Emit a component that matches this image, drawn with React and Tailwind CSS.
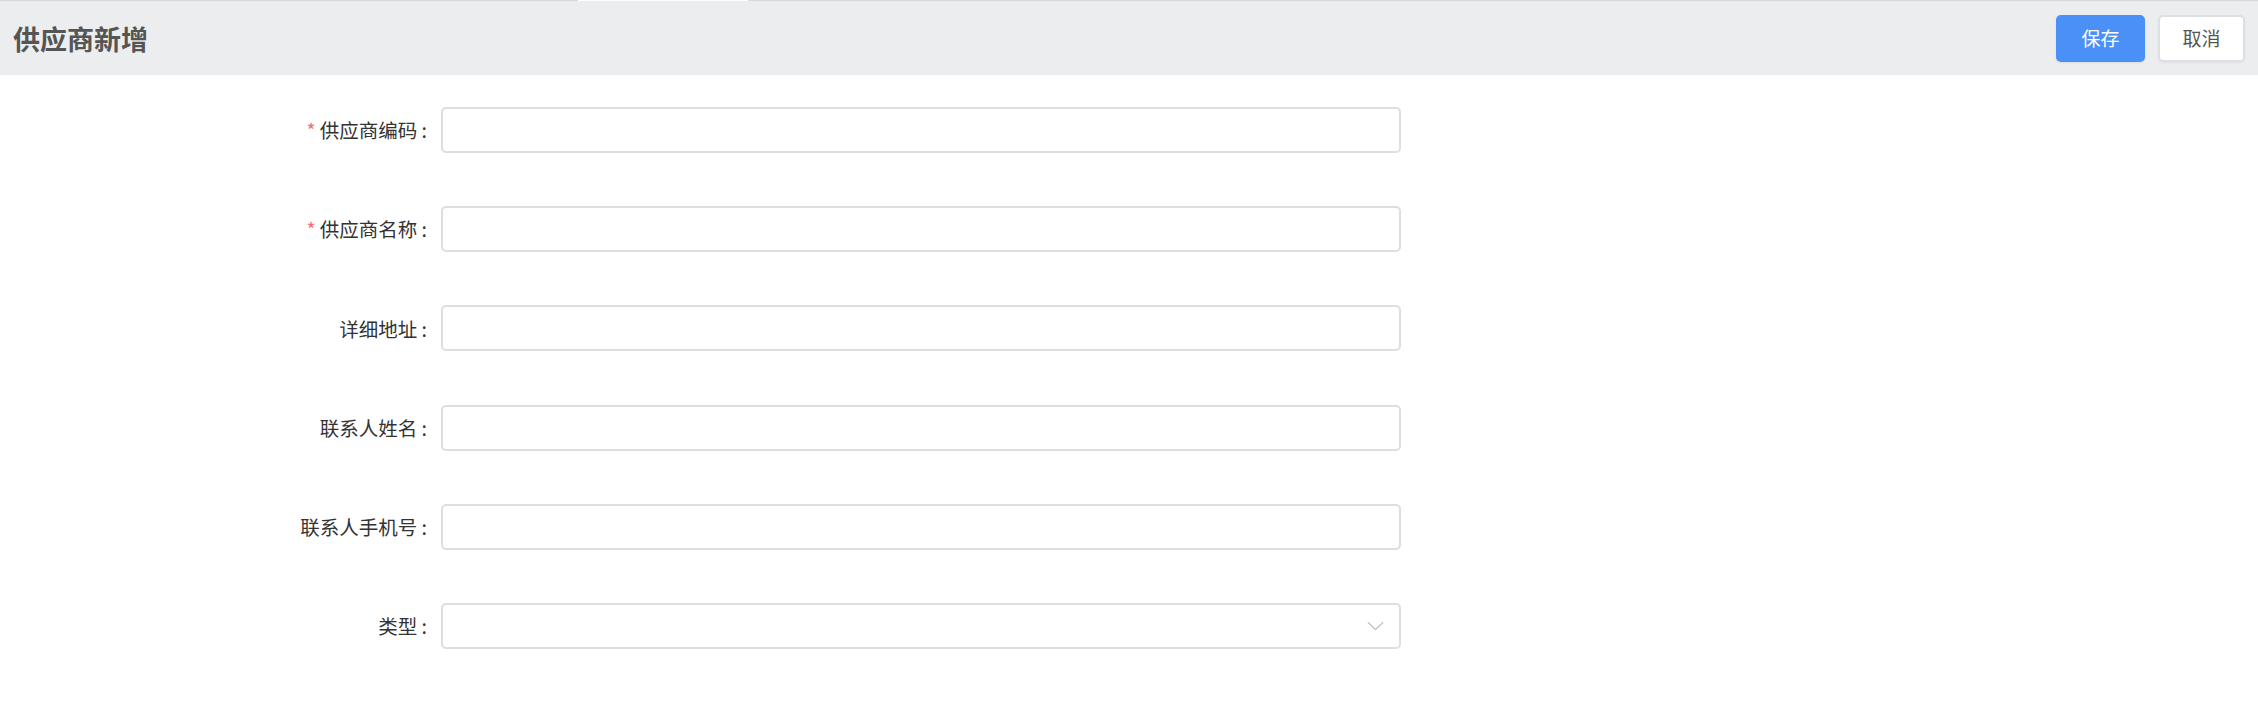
import React from "react"

const font = { fontFamily: '"Noto Sans CJK SC", "Noto Sans", sans-serif' }

const fields = [
  { label: "供应商编码", required: true },
  { label: "供应商名称", required: true },
  { label: "详细地址" },
  { label: "联系人姓名" },
  { label: "联系人手机号" },
  { label: "类型", select: true },
]

const SupplierCreate = () => {
  return (
    <div className="min-h-screen bg-white" style={font}>
      {/* tab strip edge */}
      <div className="flex h-px">
        <div className="w-[578px] bg-[#d6d8db]"></div>
        <div className="w-[170px] bg-white"></div>
        <div className="flex-1 bg-[#d6d8db]"></div>
      </div>

      {/* Header */}
      <div className="flex h-[74px] items-center justify-between bg-[#ecedef] pl-[13px] pr-[13px]">
        <h1 className="text-[27px] font-bold leading-none text-[#555555]">供应商新增</h1>
        <div className="flex items-center gap-[13px]">
          <button className="h-[47px] w-[89px] rounded-[5px] bg-[#4a90f6] text-[19px] text-white shadow-[0_1px_2px_rgba(0,0,0,0.08)]">
            保存
          </button>
          <button className="h-[47px] w-[87px] rounded-[5px] border-2 border-[#dcdfe3] bg-white text-[19px] text-[#555555] shadow-[0_1px_2px_rgba(0,0,0,0.05)]">
            取消
          </button>
        </div>
      </div>

      {/* Form */}
      <div className="flex flex-col gap-[53.2px] pl-[261px] pt-[32px]">
        {fields.map((f) => (
          <div key={f.label} className="flex items-center">
            <label className="w-[180px] pr-[14px] text-right text-[19.5px] leading-none text-[#333333]">
              {f.required && <span className="mr-[4px] text-[#f56c6c]">*</span>}
              {f.label} :
            </label>
            <div className="relative h-[46px] w-[960px] rounded-[5px] border-2 border-[#dcdee2] bg-white">
              {f.select && (
                <svg
                  className="absolute right-[15px] top-1/2 -translate-y-1/2"
                  width="17"
                  height="9"
                  viewBox="0 0 17 9"
                  fill="none"
                >
                  <path d="M0.8 0.8 L8.5 8 L16.2 0.8" stroke="#c0c4cc" strokeWidth="1.3" />
                </svg>
              )}
            </div>
          </div>
        ))}
      </div>
    </div>
  )
}

export default SupplierCreate
